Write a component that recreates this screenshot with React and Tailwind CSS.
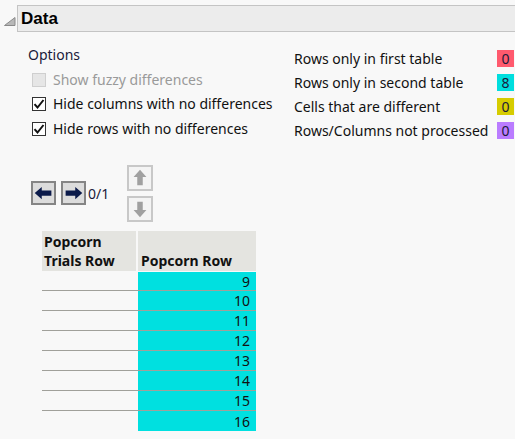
import React from "react";

const font = { fontFamily: '"Noto Sans", "DejaVu Sans", sans-serif' };

function Check({ checked, disabled }) {
  return (
    <span
      className={`w-[14px] h-[14px] border flex items-center justify-center ${
        disabled ? "border-[#cfcfcf] bg-[#e6e6e6]" : "border-[#333] bg-white"
      }`}
    >
      {checked && (
        <svg width="12" height="12" viewBox="0 0 12 12">
          <path d="M1.5 6.2 L4.5 9.5 L10.5 2" fill="none" stroke="#111" strokeWidth="2" />
        </svg>
      )}
    </span>
  );
}

function Badge({ color, v }) {
  return (
    <div className={`w-[17px] h-[17px] ${color} flex items-center justify-center text-[14px] text-[#1a1a3a]`}>
      {v}
    </div>
  );
}

function ArrowBtn({ dir, enabled }) {
  const fill = enabled ? "#0b1a4a" : "#a0a0a0";
  let d;
  if (dir === "left") d = "M2 9 L10 2 L10 6 L21 6 L21 12 L10 12 L10 16 Z";
  if (dir === "right") d = "M22 9 L14 2 L14 6 L3 6 L3 12 L14 12 L14 16 Z";
  if (dir === "up") d = "M12 3 L5 11 L9 11 L9 20 L15 20 L15 11 L19 11 Z";
  if (dir === "down") d = "M12 21 L5 13 L9 13 L9 4 L15 4 L15 13 L19 13 Z";
  const horiz = dir === "left" || dir === "right";
  return (
    <div
      className={`flex items-center justify-center border-2 ${
        enabled ? "border-[#858585] bg-[#dcdcdc] w-[25px] h-[24px]" : "border-[#c8c8c8] bg-[#f4f4f4] w-[26px] h-[26px]"
      }`}
    >
      <svg width="22" height={horiz ? 18 : 22} viewBox={horiz ? "0 0 24 18" : "0 0 24 24"}>
        <path d={d} fill={fill} />
      </svg>
    </div>
  );
}

export default function App() {
  const rows = [9, 10, 11, 12, 13, 14, 15, 16];
  return (
    <div className="w-[515px] h-[439px] bg-[#f8f8f8] overflow-hidden text-[#111]" style={font}>
      <div className="flex items-start pt-[5px]">
        <div className="w-[17px] h-[27px] flex items-end pb-[6px] pl-[4px]">
          <svg width="12" height="9" viewBox="0 0 12 9">
            <path d="M11 0.5 L11 8.5 L0.5 8.5 Z" fill="#b8b8b8" stroke="#8a8a8a" strokeWidth="1" />
          </svg>
        </div>
        <div className="flex-1 h-[27px] border border-r-0 border-[#c4c4c4] bg-[#ececec] flex items-center pl-[3px]">
          <span className="text-[17px] font-bold text-black leading-none" style={{ fontFamily: '"Liberation Sans", Arial, sans-serif' }}>Data</span>
        </div>
      </div>

      <div className="flex pl-[28px] pt-[14px]">
        <div className="w-[266px]">
          <div className="text-[14px] leading-[17px] text-[#1a1a3a]">Options</div>
          <div className="flex flex-col gap-[7px] mt-[8px] pl-[4px]">
            <div className="flex items-center gap-[7px] h-[17px]">
              <Check disabled />
              <span className="text-[14px] text-[#9a9a9a]">Show fuzzy differences</span>
            </div>
            <div className="flex items-center gap-[7px] h-[17px]">
              <Check checked />
              <span className="text-[14px]">Hide columns with no differences</span>
            </div>
            <div className="flex items-center gap-[7px] h-[17px] mt-[1px]">
              <Check checked />
              <span className="text-[14px]">Hide rows with no differences</span>
            </div>
          </div>
        </div>
        <div className="flex flex-col gap-[7px] mt-[4px]">
          {[
            ["Rows only in first table", "bg-[#ff5a6e]", 0],
            ["Rows only in second table", "bg-[#00dede]", 8],
            ["Cells that are different", "bg-[#d6cc00]", 0],
            ["Rows/Columns not processed", "bg-[#ba7cff]", 0],
          ].map(([t, c, v]) => (
            <div key={t} className="flex items-center justify-between w-[220px] h-[17px]">
              <span className="text-[14px]">{t}</span>
              <Badge color={c} v={v} />
            </div>
          ))}
        </div>
      </div>

      <div className="flex items-start pl-[31px] mt-[26px]">
        <div className="flex items-center gap-[5px] mt-[16px]">
          <ArrowBtn dir="left" enabled />
          <ArrowBtn dir="right" enabled />
        </div>
        <span className="text-[14px] text-[#1a1a3a] mt-[18px] ml-[2px] w-[39px]">0/1</span>
        <div className="flex flex-col gap-[5px]">
          <ArrowBtn dir="up" />
          <ArrowBtn dir="down" />
        </div>
      </div>

      <div className="ml-[42px] mt-[9px] w-[214px]">
        <div className="flex h-[40px] bg-[#e4e4e0]">
          <div className="w-[96px] border-r-2 border-[#f8f8f8] flex flex-col justify-end pb-[1px] pl-[2px] text-[14px] font-bold leading-[19px]">
            <span>Popcorn</span>
            <span>Trials Row</span>
          </div>
          <div className="flex-1 flex items-end pb-[1px] pl-[3px] text-[14px] font-bold leading-[19px]">Popcorn Row</div>
        </div>
        {rows.map((r, i) => (
          <div key={r} className="flex h-[20px]">
            <div className={`w-[96px] ${i < rows.length - 1 ? "border-b border-[#a0a09a]" : ""}`} />
            <div className={`flex-1 bg-[#00e0e0] flex items-center justify-end pr-[6px] text-[14px] ${i < rows.length - 1 ? "border-b border-[#a0a09a]" : ""} ${i === 0 ? "mt-[1px]" : ""}`}>
              {r}
            </div>
          </div>
        ))}
      </div>
    </div>
  );
}
